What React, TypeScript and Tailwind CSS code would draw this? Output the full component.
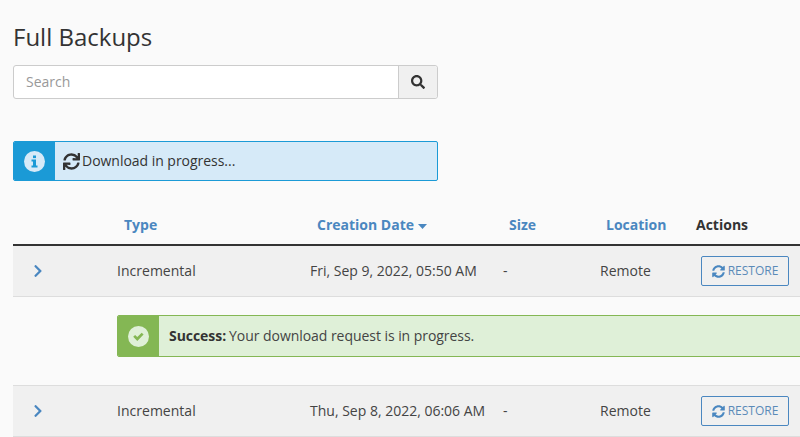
import { FaChevronRight, FaSearch, FaSync, FaSyncAlt } from "react-icons/fa";

const rowGrid = "grid grid-cols-[104px_193px_194px_96px_96px_1fr] items-center";

function BackupRow({ date }: { date: string }) {
  return (
    <div className={`${rowGrid} h-[51px] bg-[#f0f0f0] border-b border-[#dddddd] text-[14px] text-[#444444]`}>
      <div className="pl-[18px] text-[#4a87c0]">
        <FaChevronRight size={14} />
      </div>
      <div className="pb-[2px] tracking-[0.02px]">Incremental</div>
      <div className="pb-[2px]">{date}</div>
      <div className="-ml-[1px] pb-[2px]">-</div>
      <div className="pb-[2px]">Remote</div>
      <div className="pl-[5px]">
        <button className="flex h-[30px] w-[88px] items-center justify-center gap-[3px] rounded-[2px] border border-[#4a87c0] text-[12px] text-[#5a8ab8]">
          <FaSyncAlt size={13} className="text-[#4a87c0]" />
          RESTORE
        </button>
      </div>
    </div>
  );
}

export default function App() {
  return (
    <div className="h-[437px] w-[800px] overflow-hidden bg-[#fafafa] pl-[13px] font-['Open_Sans',sans-serif] text-[#333333]">
      <h1 className="pt-[21px] pb-[1px] text-[24px] leading-[32px] text-[#333333]">Full Backups</h1>

      <div className="mt-[11px] flex h-[34px] w-[425px] rounded-[3px] border border-[#cccccc] bg-white">
        <div className="flex-1 pl-[12px] text-[14px] leading-[32px] text-[#999999]">Search</div>
        <div className="flex w-[39px] items-center justify-center rounded-r-[3px] border-l border-[#cccccc] bg-[#f0f0f0] text-[#333333]">
          <FaSearch size={14} />
        </div>
      </div>

      <div className="mt-[42px] flex h-[40px] w-[425px] overflow-hidden rounded-[2px] border border-[#1b9ad6] bg-[#d6eaf8]">
        <div className="flex w-[41px] items-center justify-center bg-[#1b9ad6]">
          <svg width="21" height="21" viewBox="0 0 21 21">
            <circle cx="10.5" cy="10.5" r="10.5" fill="#d6eaf8" />
            <rect x="9" y="4.5" width="3" height="2.6" fill="#1b9ad6" />
            <path d="M7.5 8.5h4.5v6h1.5v2h-6v-2h1.5v-4h-1.5z" fill="#1b9ad6" />
          </svg>
        </div>
        <div className="flex items-center pl-[8px] text-[14px] tracking-[-0.03px] text-[#333333]">
          <FaSync size={17} className="mr-[2px]" />
          <span className="pb-[2px]">Download in progress...</span>
        </div>
      </div>

      <div className="mt-[24px] w-[800px]">
        <div className={`${rowGrid} h-[41px] border-b-2 border-[#333333] text-[14px] font-bold text-[#4a87c0]`}>
          <div />
          <div className="pl-[7px]">Type</div>
          <div className="flex items-center pl-[7px]">
            Creation Date
            <svg width="9" height="5" viewBox="0 0 9 5" className="mt-[4px] ml-[4px]">
              <path d="M0 0h9L4.5 5z" fill="#4a87c0" />
            </svg>
          </div>
          <div className="pl-[5px]">Size</div>
          <div className="pl-[6px]">Location</div>
          <div className="text-[#333333]">Actions</div>
        </div>

        <BackupRow date="Fri, Sep 9, 2022, 05:50 AM" />

        <div className="h-[89px] border-b border-[#dddddd] pl-[104px] pt-[18px]">
          <div className="flex h-[42px] overflow-hidden rounded-[2px] border border-[#84b754] bg-[#dff0d8] text-[14px]">
            <div className="flex w-[41px] items-center justify-center bg-[#84b754]">
              <svg width="21" height="21" viewBox="0 0 21 21">
                <circle cx="10.5" cy="10.5" r="10.5" fill="#dff0d8" />
                <path d="M5.2 10.8l1.9-1.9 2.2 2.2 4.4-4.4 1.9 1.9-6.3 6.3z" fill="#84b754" />
              </svg>
            </div>
            <div className="flex items-center pb-[2px] pl-[10px] tracking-[-0.05px] text-[#444444]">
              <span className="mr-[3px] font-bold text-[#333333]">Success:</span>
              Your download request is in progress.
            </div>
          </div>
        </div>

        <BackupRow date="Thu, Sep 8, 2022, 06:06 AM" />
      </div>
    </div>
  );
}
